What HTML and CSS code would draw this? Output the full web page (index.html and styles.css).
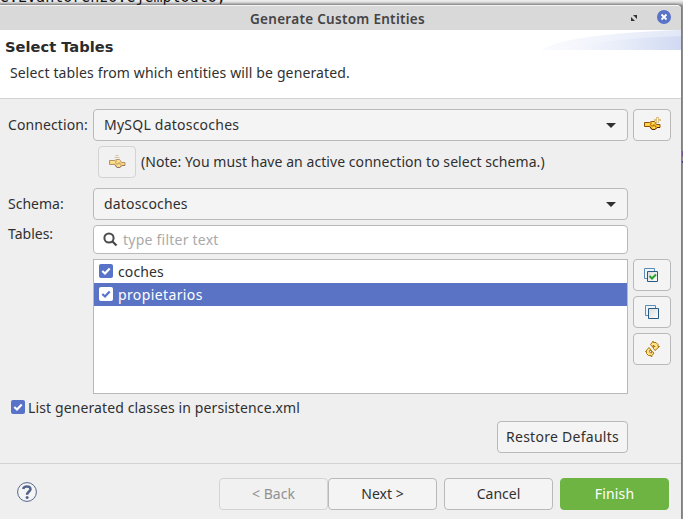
FILE: index.html
```html
<!DOCTYPE html>
<html lang="en">
<head>
<meta charset="utf-8">
<title>Generate Custom Entities</title>
<link rel="stylesheet" href="styles.css">
</head>
<body>
<svg width="0" height="0" class="defs">
  <defs>
    <symbol id="tick" viewBox="0 0 14 14"><path d="M3.300 7 L6 9.500 L10.700 4.500" fill="none" stroke="currentColor" stroke-width="2.200"/></symbol>
    <symbol id="hands" viewBox="0 0 17 14">
      <path d="M.5 5.500h5l2-1h3l2 3h3.500v3H13l-2 2H8l-2-3H.5z" fill="#ffca32" stroke="#8d510e"/>
      <path d="M6 10l2 2.500h3l2-2h3" fill="none" stroke="#55290f"/>
      <path d="M7.500 5.500l-1 2 1 1.500h2l.5-1.500 2 2-2 1" fill="none" stroke="#a7600c"/>
      <path d="M2 7h3M8 6h3M9 10.500h2" fill="none" stroke="#ffe873"/>
    </symbol>
    <symbol id="bent-arrow" viewBox="0 0 9 9"><path d="M.5 3.500L3.500.5h2v2l1.500 1.500h1.500L5.500 7.500 2 4.500h1.500v-1z" fill="#ffe28a" stroke="#ad7208"/></symbol>
    <linearGradient id="swoosh" x1="0" x2="1"><stop offset="0" stop-color="#f8f9fd"/><stop offset=".5" stop-color="#e7ecf9"/><stop offset="1" stop-color="#d1daf3"/></linearGradient>
    <linearGradient id="sheet" x1="0" y1="0" x2="1" y2="1"><stop offset="0" stop-color="#d9dad8"/><stop offset="1" stop-color="#fff"/></linearGradient>
  </defs>
</svg>
<div class="editor"><span class="code">e.Evantorenzo.ejemplodto;</span><span class="code side">5</span></div>
<main class="dialog">
  <header class="titlebar">
    <span class="title">Generate Custom Entities</span>
    <svg class="expand" width="7" height="7"><path d="M2 0H6v4zM0 2V6h4z" fill="#333"/></svg>
    <svg class="close" width="14" height="14"><circle cx="7" cy="7" r="7" fill="#5873c8"/><path d="M4.500 4.500l5 5m0-5l-5 5" stroke="#fff" stroke-width="1.800"/></svg>
  </header>
  <section class="banner">
    <svg class="swoosh" width="140" height="20"><path d="M0 20Q25 4 140 0V20z" fill="url(#swoosh)" opacity=".65"/><path d="M25 20Q65 8 140 6V20z" fill="url(#swoosh)"/></svg>
    <h1>Select Tables</h1>
    <p>Select tables from which entities will be generated.</p>
  </section>
  <section class="form">
    <label class="t-conn">Connection:</label>
    <div class="box combo"><span class="t-mysql">MySQL datoscoches</span><svg width="10" height="5"><path d="M0 0h10L5 5z" fill="#303030"/></svg></div>
    <button class="box"><svg class="hand" width="17" height="14"><use href="#hands"/><path d="M13.500 0v6M10.500 3h6" stroke="#c18d22" stroke-width="2"/><path d="M13.500 .5v5M11 3h5" stroke="#fff8cf"/></svg></button>

    <div class="note"><button class="box disabled"><svg width="17" height="14"><use href="#hands"/><path d="M6.500 .5h3M5.500 2.500h5" stroke="#bda876"/></svg></button><span class="t-note">(Note: You must have an active connection to select schema.)</span></div>

    <label class="t-schema">Schema:</label>
    <div class="box combo"><span class="t-datos">datoscoches</span><svg width="10" height="5"><path d="M0 0h10L5 5z" fill="#303030"/></svg></div>

    <label class="tables">Tables:</label>
    <div class="box filter"><svg width="15" height="15"><circle cx="6" cy="6" r="4.600" fill="none" stroke="#4b4b4b" stroke-width="2"/><path d="M9.500 9.500l4 4" stroke="#4b4b4b" stroke-width="2.300"/></svg><span class="t-filter">type filter text</span></div>

    <div class="list">
      <div class="item"><svg class="check"><use href="#tick"/></svg><span class="t-coches">coches</span></div>
      <div class="item selected"><svg class="check"><use href="#tick"/></svg><span class="t-prop">propietarios</span></div>
    </div>
    <div class="tools">
      <button class="box"><svg class="pages" width="15" height="15"><path d="M.5.5h10v10H.5z" fill="#eef4f8" stroke="#5c8db8"/><path d="M3.500 3.500h10v10h-10z" fill="url(#sheet)" stroke="#275b87"/><path d="M5.500 8l2.500 2.500 4-4" fill="none" stroke="#25a22b" stroke-width="2"/></svg></button>
      <button class="box"><svg class="pages" width="15" height="15"><path d="M1.500.5h10v10h-10z" fill="#eef4f8" stroke="#5c8db8"/><path d="M4.500 3.500h10v10h-10z" fill="url(#sheet)" stroke="#275b87"/></svg></button>
      <button class="box"><svg class="refresh" width="15" height="16"><path d="M5.500 3.500l2-2.500v-.5h1v1h2.500l2 2v2h1.500L10 9.500 8.500 7.500V5.500H10L9 4.500H8v2z" fill="#ffe28a" stroke="#ad7208"/><path d="M9 12l-2 2.500v1H6v-1H3.500l-2-2v-2H.5L4 6.500l2.500 3h-2v1L5.500 12h1v-2z" fill="#ffe28a" stroke="#ad7208"/></svg></button>
    </div>
  </section>
  <div class="option"><svg class="check"><use href="#tick"/></svg><span class="t-option">List generated classes in persistence.xml</span></div>
  <div class="restore"><button class="box"><span class="t-restore">Restore Defaults</span></button></div>
  <footer>
    <svg class="help" width="20" height="20"><circle cx="10" cy="10" r="9.400" fill="#f5f5f6" stroke="#53658a"/><path d="M6.200 7Q6.600 4.500 10 4.500T13.500 7.200C13.500 9.500 10.100 9.500 10.100 12.800" fill="none" stroke="#53658a" stroke-width="2.500"/><circle cx="10.100" cy="15.500" r="1.500" fill="#53658a"/></svg>
    <button class="box disabled"><span>&lt; Back</span></button>
    <button class="box"><span>Next &gt;</span></button>
    <button class="box cancel"><span>Cancel</span></button>
    <button class="box finish"><span class="t-finish">Finish</span></button>
  </footer>
</main>
</body>
</html>
```
FILE: styles.css
```css
* { box-sizing: border-box; }
body { margin: 0; height: 519px; overflow: hidden; position: relative; background: #979797; font: 14px/20px "Noto Sans", "Open Sans", sans-serif; color: #303030; }
svg { display: block; flex: none; }
.defs { position: absolute; }
.editor { height: 5px; background: linear-gradient(#ececec 20%, #aaa); }
.code { position: absolute; left: 0; top: -12px; font: 15px/18px "DejaVu Sans Mono", monospace; color: #111; clip-path: inset(0 0 1px); }
.side { left: 681px; top: 149px; color: #20209a; }
.dialog { width: 681px; height: 514px; background: #efefef; border-top: 1px solid #f4f4f4; border-radius: 0 4px 0 0; overflow: hidden; position: relative; box-shadow: 0 0 3px #555; }
.titlebar { height: 24px; background: #d9d9d9; display: flex; align-items: center; padding-left: 250px; }
.title { width: 175px; font-weight: 600; color: #444; font-size: 13.5px; letter-spacing: .29px; position: relative; top: 1px; }
.expand { margin-left: 206px; }
.close { margin-left: 19px; margin-top: -2px; }
.banner { height: 69px; background: #fff; border-bottom: 1px solid #d2d2d2; padding: 7px 0 0 5px; position: relative; }
.swoosh { position: absolute; right: 0; top: 0; }
h1 { margin: 0; font: bold 14.67px/20px "DejaVu Sans", sans-serif; color: #2b2b2b; }
p { margin: 6px 0 0 5px; line-height: 20px; letter-spacing: .13px; }
span, label, p, h1 { white-space: nowrap; }
.t-conn, .t-coches { letter-spacing: .1px; }
.t-mysql, .t-filter { letter-spacing: .23px; }
.t-note { letter-spacing: .06px; }
.t-datos, .t-finish { letter-spacing: .17px; }
.t-prop { letter-spacing: .38px; }
.t-option { letter-spacing: .12px; }
.t-restore { letter-spacing: .27px; }
.form { display: grid; grid-template-columns: 80px 535px 38px; grid-template-rows: 32px 32px 37px 29px 135px; column-gap: 5px; row-gap: 5px; padding: 10px 0 0 8px; align-items: center; }
.form > label { grid-column: 1; }
.box { height: 32px; margin: 0; border: 1px solid #b9b9b9; border-radius: 4px; background: #f4f4f4; display: flex; align-items: center; justify-content: center; padding: 0; font: inherit; color: #303030; }
.box.disabled { border-color: #d3d3d3; background: #f1f1f1; color: #919191; }
.disabled svg { opacity: .6; }
.combo { justify-content: space-between; padding: 0 11px 0 10px; }
.form > .box { grid-column: 2; }
.form > button.box { grid-column: 3; }
.hand { margin-bottom: 2px; }
.pages { margin-right: 2px; }
.note { grid-column: 2; display: flex; align-items: center; gap: 5px; padding-left: 5px; }
.note .box { width: 38px; }
.form > .t-schema, .t-schema + .combo { align-self: end; }
.t-schema { height: 26px; }
.tables { margin-top: -11px; }
.form > .filter { height: 29px; background: #fff; justify-content: flex-start; padding-left: 9px; gap: 5px; color: #aaa; }
.list { grid-column: 2; height: 135px; background: #fff; border: 1px solid #b9b9b9; }
.item { height: 23px; display: flex; align-items: center; padding-left: 5px; gap: 5px; }
.selected { background: #5a73c4; color: #fff; }
.check { width: 14px; height: 14px; border-radius: 2px; background: #5873c8; color: #fff; }
.selected .check { background: #fff; color: #5873c8; }
.item .check { margin-bottom: 2px; }
.tools { align-self: start; display: grid; gap: 5px; }
.tools .box { width: 38px; }
.option { height: 20px; margin-top: 4px; padding-left: 11px; display: flex; align-items: center; gap: 3px; }
.option .check { margin-bottom: 2px; }
.restore { display: flex; padding: 3px 0 0 497px; height: 45px; }
.restore .box { width: 131px; }
footer { border-top: 1px solid #d2d2d2; padding: 14px 12px 0 17px; display: flex; align-items: flex-start; height: 56px; }
footer .box { width: 109px; }
.help { margin-top: 4px; margin-right: 182px; }
.cancel { margin-left: 7px; }
footer .finish { margin-left: 7px; background: #6db442; border-color: #6db442; color: #fff; }
```
